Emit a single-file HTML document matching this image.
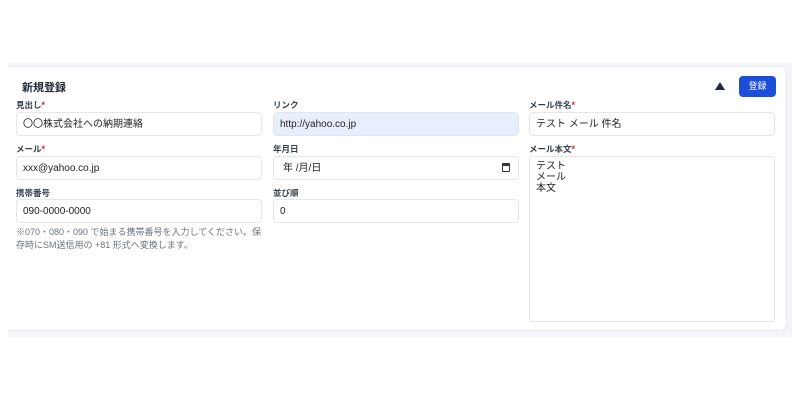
<!DOCTYPE html>
<html><head><meta charset="utf-8"><style>
*{box-sizing:border-box;margin:0;padding:0}
body{width:800px;height:400px;background:#fff;font-family:"Liberation Sans","Noto Sans CJK JP",sans-serif;position:relative;overflow:hidden}
.band{position:absolute;left:8px;top:63px;width:784px;height:274px;background:#f4f5f9}
.card{position:absolute;left:8px;top:66px;width:779px;height:265px;background:#fff;border:1px solid #e8eaf0;border-left:none;border-radius:0 7px 7px 0}
.t{position:absolute;font-size:11px;font-weight:bold;color:#1f2937;left:22px;top:79px}
.l{position:absolute;font-size:8.5px;font-weight:bold;color:#374151}
.l b{color:#dc2626;font-size:9px}
.i{position:absolute;height:24px;border:1px solid #e2e6ee;border-radius:4px;background:#fff;font-size:10px;color:#222;padding:5px 6px;line-height:13px}
.btn{position:absolute;left:739px;top:76px;width:37px;height:21px;background:#1d4ed8;border-radius:4px;color:#fff;font-size:9px;text-align:center;line-height:21px}
.tri{position:absolute;left:715px;top:82px;width:0;height:0;border-left:5px solid transparent;border-right:5px solid transparent;border-bottom:8px solid #1f2937}
.h{position:absolute;left:16px;top:226px;width:246px;font-size:9px;color:#6b7280;line-height:13px}
</style></head><body>
<div class="band"></div><div class="card"></div>
<div class="t">新規登録</div>
<div class="tri"></div><div class="btn">登録</div>
<div class="l" style="left:16px;top:99px">見出し<b>*</b></div>
<div class="i" style="left:16px;top:112px;width:246px">〇〇株式会社への納期連絡</div>
<div class="l" style="left:273px;top:99px">リンク</div>
<div class="i" style="left:273px;top:112px;width:246px;background:#e8effc">http://yahoo.co.jp</div>
<div class="l" style="left:529px;top:99px">メール件名<b>*</b></div>
<div class="i" style="left:529px;top:112px;width:246px">テスト メール 件名</div>
<div class="l" style="left:16px;top:143px">メール<b>*</b></div>
<div class="i" style="left:16px;top:156px;width:246px">xxx@yahoo.co.jp</div>
<div class="l" style="left:273px;top:143px">年月日</div>
<div class="i" style="left:273px;top:156px;width:246px;padding-left:9px">年 /月/日<span style="position:absolute;right:8px;top:6px;width:8px;height:9px;border:1.5px solid #333;border-top-width:3px;border-radius:1px"></span></div>
<div class="l" style="left:529px;top:143px">メール本文<b>*</b></div>
<div class="i" style="left:529px;top:156px;width:246px;height:166px;padding-top:4px;line-height:11px">テスト<br>メール<br>本文</div>
<div class="l" style="left:16px;top:187px">携帯番号</div>
<div class="i" style="left:16px;top:199px;width:246px">090-0000-0000</div>
<div class="l" style="left:273px;top:187px">並び順</div>
<div class="i" style="left:273px;top:199px;width:246px">0</div>
<div class="h">※070・080・090 で始まる携帯番号を入力してください。保<br>存時にSM送信用の +81 形式へ変換します。</div>
</body></html>
